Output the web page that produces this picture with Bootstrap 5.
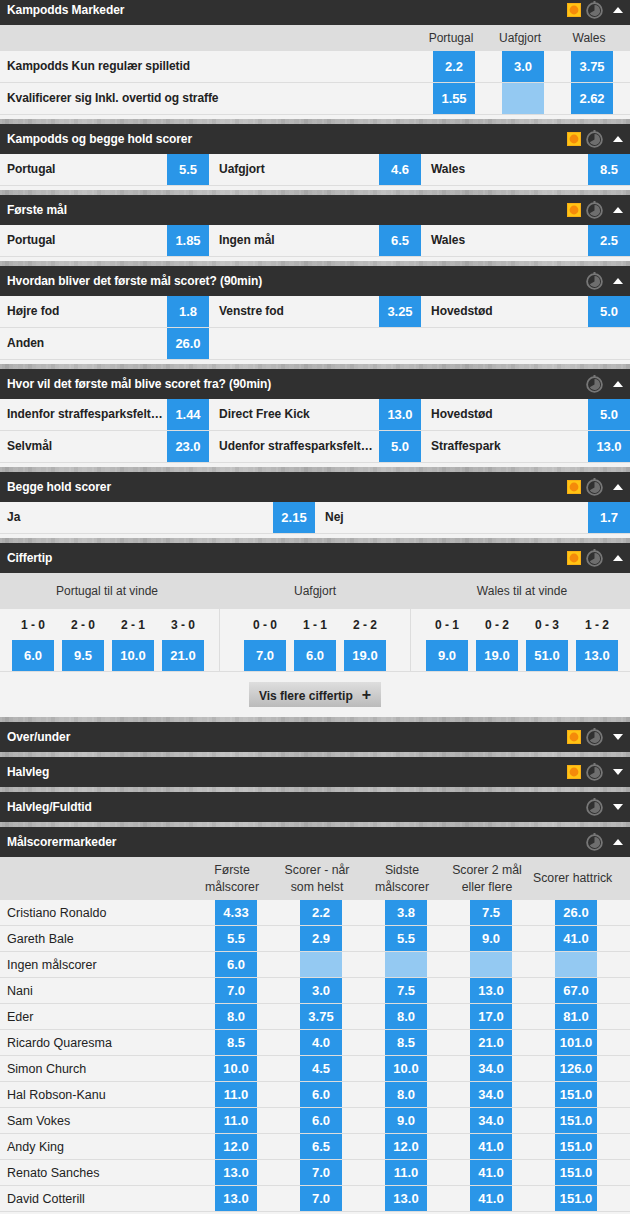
<!DOCTYPE html>
<html lang="da">
<head>
<meta charset="utf-8">
<title>Markeder</title>
<link rel="stylesheet" href="https://cdn.jsdelivr.net/npm/bootstrap@5.3.0/dist/css/bootstrap.min.css">
<style>
html,body{background:#f3f3f3}
body{margin:0;font-family:"Liberation Sans",Arial,sans-serif;font-size:12px;line-height:1.2;color:#222}
.pagewrap{margin-top:-5px;height:1219px;overflow:hidden}
.mkt{padding-bottom:5px;background-color:#b6b6b6;background-image:repeating-linear-gradient(90deg,rgba(255,255,255,.09) 0 2px,transparent 2px 5px,rgba(0,0,0,.05) 5px 9px,transparent 9px 13px,rgba(255,255,255,.06) 13px 18px,transparent 18px 23px),linear-gradient(90deg,#acacac,#bfbfbf 12%,#b0b0b0 23%,#c1c1c1 37%,#aeaeae 49%,#bcbcbc 61%,#adadad 74%,#c0c0c0 88%,#b2b2b2)}
.mkt-head{height:30px;background:#303030;color:#fff;padding:0 7px;font-weight:700;font-size:12px;letter-spacing:-.08px}
.mkt-tools{gap:5px}
.ico-fav{width:14px;height:14px;display:block}
.ico-clock{width:17px;height:18px;display:block}
.ico-arrow{width:10px;height:6px;display:block;margin-left:5px}
.mkt-body{background:#f3f3f3}
.pad-end{padding-bottom:4px}
.odd{display:flex;align-items:center;justify-content:center;width:42px;background:#2a96e8;color:#fff;font-weight:700;font-size:13px}
.odd-off{background:#94c9f2}
.grid-main{display:grid;grid-template-columns:433px 69px 69px 59px}
.grid-head{background:#ddd;height:26px;align-items:center;font-size:12px;color:#333}
.grid-head>span{width:42px;white-space:nowrap;display:flex;justify-content:center;margin-left:-3px}
.grid-line{height:32px;border-bottom:1px solid #ddd;font-weight:700;align-items:stretch;letter-spacing:-.08px}
.grid-line>.lbl{padding-left:7px;display:flex;align-items:center}
.tri-row{display:grid;grid-template-columns:209px 212px 209px;height:32px;border-bottom:1px solid #ddd;letter-spacing:-.04px}
.tri-cell{display:flex;justify-content:space-between;min-width:0;font-weight:700}
.tri-cell>.lbl{flex:1;min-width:0;padding-left:10px;display:flex;align-items:center;overflow:hidden}
.tri-cell:first-child>.lbl{padding-left:7px}
.lbl-cut{display:block;overflow:hidden;text-overflow:ellipsis;white-space:nowrap}
.duo-row{display:grid;grid-template-columns:315px 315px;height:32px;border-bottom:1px solid #ddd}
.cs-grid{display:grid;grid-template-columns:220px 191px 219px;border-bottom:1px solid #ddd}
.cs-col{border-right:1px solid #ddd}
.cs-col:last-child{border-right:0}
.cs-title{background:#ddd;height:36px;display:flex;align-items:center;justify-content:center;color:#333}
.cs-col:first-child .cs-title{padding-right:5px}
.cs-col:last-child .cs-title{padding-left:3px}
.cs-sets{display:flex;gap:8px;height:62px;justify-content:center}
.cs-col:first-child .cs-sets{padding-right:3px}
.cs-col:last-child .cs-sets{padding-left:3px}
.cs-set{width:42px;display:flex;flex-direction:column}
.cs-score{height:31px;display:flex;align-items:center;justify-content:center;font-weight:700;padding-top:1px}
.cs-set .odd{height:31px;width:42px}
.more-wrap{height:45px;padding-top:10px;background:#f3f3f3}
.more-btn{width:132px;height:25px;background:linear-gradient(#dedede,#bbb);border:0;border-radius:0;color:#222;font:700 12px "Liberation Sans",Arial,sans-serif;padding:0}
.more-btn b{font-size:16px;font-weight:700;margin-left:9px;line-height:1}
.sc-grid{display:grid;grid-template-columns:193px repeat(5,85px) 12px}
.sc-head{background:#ddd;height:43px;color:#333;align-items:center;font-size:12.3px}
.sc-head>span{text-align:center;line-height:17px;padding-right:7px;white-space:nowrap}
.sc-row{height:26px;border-bottom:1px solid #ddd}
.sc-row>span:first-child{padding:1px 0 0 7px;display:flex;align-items:center;font-size:12.5px}
.sc-row .odd{margin-left:22px;height:25px;padding-top:1px}
</style>
</head>
<body>
<svg width="0" height="0" class="d-block position-absolute">
<symbol id="fav" viewBox="0 0 14 14"><rect width="14" height="14" fill="#f9b014"/><rect x="1" y="1" width="12" height="12" fill="#ffc414"/><circle cx="7" cy="7" r="4.4" fill="#f58a0a"/></symbol>
<symbol id="clock" viewBox="0 0 17 18"><rect x="7.5" y="0" width="2" height="2" fill="#777"/><circle cx="8.5" cy="9.5" r="7.4" fill="none" stroke="#777" stroke-width="1.8"/><path d="M8.5 9.5V4a5.5 5.5 0 1 1-4.76 8.25z" fill="#6e6e6e"/></symbol>
<symbol id="up" viewBox="0 0 10 6"><path d="M5 0l5 6H0z" fill="#fff"/></symbol>
<symbol id="down" viewBox="0 0 10 6"><path d="M0 0h10L5 6z" fill="#fff"/></symbol>
</svg>

<div class="pagewrap">
<section class="mkt">
 <div class="mkt-head d-flex align-items-center justify-content-between"><span>Kampodds Markeder</span><span class="mkt-tools d-flex align-items-center"><svg class="ico-fav"><use href="#fav"/></svg><svg class="ico-clock"><use href="#clock"/></svg><svg class="ico-arrow"><use href="#up"/></svg></span></div>
 <div class="mkt-body pad-end">
  <div class="grid-main grid-head"><i></i><span>Portugal</span><span>Uafgjort</span><span>Wales</span></div>
  <div class="grid-main grid-line"><span class="lbl">Kampodds Kun regulær spilletid</span><span class="odd">2.2</span><span class="odd">3.0</span><span class="odd">3.75</span></div>
  <div class="grid-main grid-line"><span class="lbl">Kvalificerer sig Inkl. overtid og straffe</span><span class="odd">1.55</span><span class="odd odd-off"></span><span class="odd">2.62</span></div>
 </div>
</section>

<section class="mkt">
 <div class="mkt-head d-flex align-items-center justify-content-between"><span>Kampodds og begge hold scorer</span><span class="mkt-tools d-flex align-items-center"><svg class="ico-fav"><use href="#fav"/></svg><svg class="ico-clock"><use href="#clock"/></svg><svg class="ico-arrow"><use href="#up"/></svg></span></div>
 <div class="mkt-body pad-end">
  <div class="tri-row"><div class="tri-cell"><span class="lbl">Portugal</span><span class="odd">5.5</span></div><div class="tri-cell"><span class="lbl">Uafgjort</span><span class="odd">4.6</span></div><div class="tri-cell"><span class="lbl">Wales</span><span class="odd">8.5</span></div></div>
 </div>
</section>

<section class="mkt">
 <div class="mkt-head d-flex align-items-center justify-content-between"><span>Første mål</span><span class="mkt-tools d-flex align-items-center"><svg class="ico-fav"><use href="#fav"/></svg><svg class="ico-clock"><use href="#clock"/></svg><svg class="ico-arrow"><use href="#up"/></svg></span></div>
 <div class="mkt-body pad-end">
  <div class="tri-row"><div class="tri-cell"><span class="lbl">Portugal</span><span class="odd">1.85</span></div><div class="tri-cell"><span class="lbl">Ingen mål</span><span class="odd">6.5</span></div><div class="tri-cell"><span class="lbl">Wales</span><span class="odd">2.5</span></div></div>
 </div>
</section>

<section class="mkt">
 <div class="mkt-head d-flex align-items-center justify-content-between"><span>Hvordan bliver det første mål scoret? (90min)</span><span class="mkt-tools d-flex align-items-center"><svg class="ico-clock"><use href="#clock"/></svg><svg class="ico-arrow"><use href="#up"/></svg></span></div>
 <div class="mkt-body pad-end">
  <div class="tri-row"><div class="tri-cell"><span class="lbl">Højre fod</span><span class="odd">1.8</span></div><div class="tri-cell"><span class="lbl">Venstre fod</span><span class="odd">3.25</span></div><div class="tri-cell"><span class="lbl">Hovedstød</span><span class="odd">5.0</span></div></div>
  <div class="tri-row"><div class="tri-cell"><span class="lbl">Anden</span><span class="odd">26.0</span></div></div>
 </div>
</section>

<section class="mkt">
 <div class="mkt-head d-flex align-items-center justify-content-between"><span>Hvor vil det første mål blive scoret fra? (90min)</span><span class="mkt-tools d-flex align-items-center"><svg class="ico-clock"><use href="#clock"/></svg><svg class="ico-arrow"><use href="#up"/></svg></span></div>
 <div class="mkt-body pad-end">
  <div class="tri-row"><div class="tri-cell"><span class="lbl"><span class="lbl-cut">Indenfor straffesparksfelt…</span></span><span class="odd">1.44</span></div><div class="tri-cell"><span class="lbl">Direct Free Kick</span><span class="odd">13.0</span></div><div class="tri-cell"><span class="lbl">Hovedstød</span><span class="odd">5.0</span></div></div>
  <div class="tri-row"><div class="tri-cell"><span class="lbl">Selvmål</span><span class="odd">23.0</span></div><div class="tri-cell"><span class="lbl"><span class="lbl-cut">Udenfor straffesparksfelt…</span></span><span class="odd">5.0</span></div><div class="tri-cell"><span class="lbl">Straffespark</span><span class="odd">13.0</span></div></div>
 </div>
</section>

<section class="mkt">
 <div class="mkt-head d-flex align-items-center justify-content-between"><span>Begge hold scorer</span><span class="mkt-tools d-flex align-items-center"><svg class="ico-fav"><use href="#fav"/></svg><svg class="ico-clock"><use href="#clock"/></svg><svg class="ico-arrow"><use href="#up"/></svg></span></div>
 <div class="mkt-body pad-end">
  <div class="duo-row"><div class="tri-cell"><span class="lbl">Ja</span><span class="odd">2.15</span></div><div class="tri-cell"><span class="lbl">Nej</span><span class="odd">1.7</span></div></div>
 </div>
</section>

<section class="mkt">
 <div class="mkt-head d-flex align-items-center justify-content-between"><span>Ciffertip</span><span class="mkt-tools d-flex align-items-center"><svg class="ico-fav"><use href="#fav"/></svg><svg class="ico-clock"><use href="#clock"/></svg><svg class="ico-arrow"><use href="#up"/></svg></span></div>
 <div class="mkt-body">
  <div class="cs-grid">
   <div class="cs-col"><div class="cs-title">Portugal til at vinde</div><div class="cs-sets">
    <div class="cs-set"><span class="cs-score">1 - 0</span><span class="odd">6.0</span></div><div class="cs-set"><span class="cs-score">2 - 0</span><span class="odd">9.5</span></div><div class="cs-set"><span class="cs-score">2 - 1</span><span class="odd">10.0</span></div><div class="cs-set"><span class="cs-score">3 - 0</span><span class="odd">21.0</span></div></div></div>
   <div class="cs-col"><div class="cs-title">Uafgjort</div><div class="cs-sets">
    <div class="cs-set"><span class="cs-score">0 - 0</span><span class="odd">7.0</span></div><div class="cs-set"><span class="cs-score">1 - 1</span><span class="odd">6.0</span></div><div class="cs-set"><span class="cs-score">2 - 2</span><span class="odd">19.0</span></div></div></div>
   <div class="cs-col"><div class="cs-title">Wales til at vinde</div><div class="cs-sets">
    <div class="cs-set"><span class="cs-score">0 - 1</span><span class="odd">9.0</span></div><div class="cs-set"><span class="cs-score">0 - 2</span><span class="odd">19.0</span></div><div class="cs-set"><span class="cs-score">0 - 3</span><span class="odd">51.0</span></div><div class="cs-set"><span class="cs-score">1 - 2</span><span class="odd">13.0</span></div></div></div>
  </div>
  <div class="more-wrap d-flex justify-content-center align-items-start"><button type="button" class="btn more-btn">Vis flere ciffertip<b>+</b></button></div>
 </div>
</section>

<section class="mkt"><div class="mkt-head d-flex align-items-center justify-content-between"><span>Over/under</span><span class="mkt-tools d-flex align-items-center"><svg class="ico-fav"><use href="#fav"/></svg><svg class="ico-clock"><use href="#clock"/></svg><svg class="ico-arrow"><use href="#down"/></svg></span></div></section>
<section class="mkt"><div class="mkt-head d-flex align-items-center justify-content-between"><span>Halvleg</span><span class="mkt-tools d-flex align-items-center"><svg class="ico-fav"><use href="#fav"/></svg><svg class="ico-clock"><use href="#clock"/></svg><svg class="ico-arrow"><use href="#down"/></svg></span></div></section>
<section class="mkt"><div class="mkt-head d-flex align-items-center justify-content-between"><span>Halvleg/Fuldtid</span><span class="mkt-tools d-flex align-items-center"><svg class="ico-clock"><use href="#clock"/></svg><svg class="ico-arrow"><use href="#down"/></svg></span></div></section>

<section class="mkt">
 <div class="mkt-head d-flex align-items-center justify-content-between"><span>Målscorermarkeder</span><span class="mkt-tools d-flex align-items-center"><svg class="ico-clock"><use href="#clock"/></svg><svg class="ico-arrow"><use href="#up"/></svg></span></div>
 <div class="mkt-body pad-end">
  <div class="sc-grid sc-head"><i></i><span>Første<br>målscorer</span><span>Scorer - når<br>som helst</span><span>Sidste<br>målscorer</span><span>Scorer 2 mål<br>eller flere</span><span>Scorer hattrick</span></div>
  <div class="sc-grid sc-row"><span>Cristiano Ronaldo</span><span class="odd">4.33</span><span class="odd">2.2</span><span class="odd">3.8</span><span class="odd">7.5</span><span class="odd">26.0</span></div>
  <div class="sc-grid sc-row"><span>Gareth Bale</span><span class="odd">5.5</span><span class="odd">2.9</span><span class="odd">5.5</span><span class="odd">9.0</span><span class="odd">41.0</span></div>
  <div class="sc-grid sc-row"><span>Ingen målscorer</span><span class="odd">6.0</span><span class="odd odd-off"></span><span class="odd odd-off"></span><span class="odd odd-off"></span><span class="odd odd-off"></span></div>
  <div class="sc-grid sc-row"><span>Nani</span><span class="odd">7.0</span><span class="odd">3.0</span><span class="odd">7.5</span><span class="odd">13.0</span><span class="odd">67.0</span></div>
  <div class="sc-grid sc-row"><span>Eder</span><span class="odd">8.0</span><span class="odd">3.75</span><span class="odd">8.0</span><span class="odd">17.0</span><span class="odd">81.0</span></div>
  <div class="sc-grid sc-row"><span>Ricardo Quaresma</span><span class="odd">8.5</span><span class="odd">4.0</span><span class="odd">8.5</span><span class="odd">21.0</span><span class="odd">101.0</span></div>
  <div class="sc-grid sc-row"><span>Simon Church</span><span class="odd">10.0</span><span class="odd">4.5</span><span class="odd">10.0</span><span class="odd">34.0</span><span class="odd">126.0</span></div>
  <div class="sc-grid sc-row"><span>Hal Robson-Kanu</span><span class="odd">11.0</span><span class="odd">6.0</span><span class="odd">8.0</span><span class="odd">34.0</span><span class="odd">151.0</span></div>
  <div class="sc-grid sc-row"><span>Sam Vokes</span><span class="odd">11.0</span><span class="odd">6.0</span><span class="odd">9.0</span><span class="odd">34.0</span><span class="odd">151.0</span></div>
  <div class="sc-grid sc-row"><span>Andy King</span><span class="odd">12.0</span><span class="odd">6.5</span><span class="odd">12.0</span><span class="odd">41.0</span><span class="odd">151.0</span></div>
  <div class="sc-grid sc-row"><span>Renato Sanches</span><span class="odd">13.0</span><span class="odd">7.0</span><span class="odd">11.0</span><span class="odd">41.0</span><span class="odd">151.0</span></div>
  <div class="sc-grid sc-row"><span>David Cotterill</span><span class="odd">13.0</span><span class="odd">7.0</span><span class="odd">13.0</span><span class="odd">41.0</span><span class="odd">151.0</span></div>
 </div>
</section>
</div>
<script src="https://cdn.jsdelivr.net/npm/bootstrap@5.3.0/dist/js/bootstrap.bundle.min.js"></script>
</body>
</html>
